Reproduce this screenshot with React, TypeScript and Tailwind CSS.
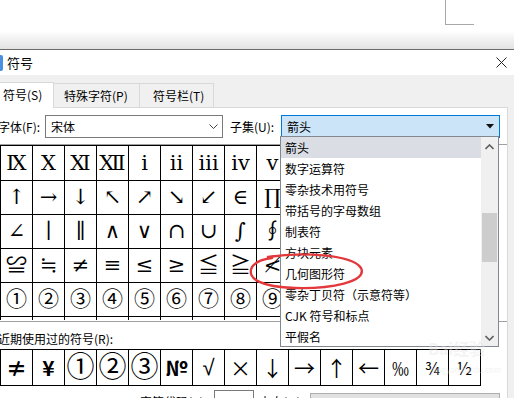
import { useState } from 'react';

const ui = "font-['Noto_Sans_CJK_SC','Noto_Sans',sans-serif]";
const sym = "font-['DejaVu_Serif','Liberation_Serif','Noto_Sans_CJK_SC',serif]";

const rows = [
  ['Ⅸ', 'Ⅹ', 'Ⅺ', 'Ⅻ', 'ⅰ', 'ⅱ', 'ⅲ', 'ⅳ', 'ⅴ', 'ⅵ', 'ⅶ', 'ⅷ', 'ⅸ', 'ⅹ', '←'],
  ['↑', '→', '↓', '↖', '↗', '↘', '↙', '∈', '∏', '∑', '∕', '∝', '∞', '∟', '∵'],
  ['∠', '∣', '∥', '∧', '∨', '∩', '∪', '∫', '∮', '∴', '∷', '∽', '≈', '≒', '≡'],
  ['≌', '≒', '≠', '≡', '≤', '≥', '≦', '≧', '≮', '≯', '⊕', '⊙', '⊥', '⊿', '⌒'],
  ['①', '②', '③', '④', '⑤', '⑥', '⑦', '⑧', '⑨', '⑩', '⑴', '⑵', '⑶', '⑷', '⑸'],
  ['⑹', '⑺', '⑻', '⑼', '⑽', '⑾', '⑿', '⒀', '⒁', '⒂', '⒃', '⒄', '⒅', '⒆', '⒇'],
];

const recent = ['≠', '¥', '①', '②', '③', '№', '√', '×', '↓', '→', '↑', '←', '‰', '¾', '½'];

const subsets = [
  '箭头',
  '数字运算符',
  '零杂技术用符号',
  '带括号的字母数组',
  '制表符',
  '方块元素',
  '几何图形符',
  '零杂丁贝符（示意符等）',
  'CJK 符号和标点',
  '平假名',
];

function recentClass(i: number) {
  if (i === 0 || i === 1 || i === 5) return 'font-bold text-[21px]';
  if (i >= 2 && i <= 4) return `text-[28px] ${sym}`;
  if (i === 6) return "text-[22px] font-['Liberation_Sans',sans-serif]";
  if (i >= 12) return 'text-[17px]';
  return 'text-[21px]';
}

export default function App() {
  const [tab] = useState(0);
  const tabs = ['符号(S)', '特殊字符(P)', '符号栏(T)'];

  return (
    <div className={`relative w-[514px] h-[398px] overflow-hidden bg-white text-[12px] text-black ${ui}`}>
      {/* document page behind the dialog */}
      <div className="h-[31px] bg-white">
        <div className="ml-[445px] w-[29px] h-[25px] border-l border-b border-[#a8a8a8]" />
      </div>
      <div className="h-[18px] bg-gradient-to-b from-white to-[#e2e2e2]" />
      <div className="h-px bg-[#6b6b6b]" />

      {/* title bar */}
      <div className="h-[25px] bg-white flex items-center">
        <div className="w-[3px] h-[16px] rounded-r-[2px] bg-[#4a90e2]" />
        <span className="ml-[4px] text-[13px]">符号</span>
        <svg className="ml-auto mr-[7px]" width="11" height="11" viewBox="0 0 11 11">
          <path d="M0.5 0.5 L10.5 10.5 M10.5 0.5 L0.5 10.5" stroke="#222" strokeWidth="1" />
        </svg>
      </div>

      {/* dialog body */}
      <div className="bg-[#f0f0f0] h-[323px] pt-[7px]">
        <div className="flex items-end h-[25px]">
          {tabs.map((t, i) =>
            i === tab ? (
              <div key={t} className="relative z-10 -ml-px w-[55px] h-[26px] -mb-px bg-white border border-b-0 border-[#d9d9d9] pl-[3px] pt-[3px]">
                {t}
              </div>
            ) : (
              <div key={t} className={`h-[24px] border border-b-0 border-l-0 border-[#d9d9d9] bg-[#f0f0f0] pt-[3px] ${i === 1 ? 'w-[86px] pl-[10px]' : 'w-[74px] pl-[13px]'}`}>
                {t}
              </div>
            )
          )}
        </div>

        <div className="-ml-px w-[509px] h-[300px] bg-white border border-[#d9d9d9]">
          {/* font / subset row */}
          <div className="flex items-center h-[23px] mt-[7px]">
            <span className="-ml-[2px] w-[47px]">字体(F):</span>
            <div className="w-[178px] h-[23px] border border-[#7a7a7a] bg-white flex items-center pl-[5px]">
              <span>宋体</span>
              <svg className="ml-auto mr-[4px]" width="9" height="6" viewBox="0 0 9 6">
                <path d="M0.5 0.5 L4.5 4.5 L8.5 0.5" stroke="#444" fill="none" />
              </svg>
            </div>
            <span className="ml-[7px] w-[51px]">子集(U):</span>
            <div className="w-[219px] h-[23px] border border-[#0078d7] bg-[#cce4f7] flex items-center pl-[5px]">
              <span>箭头</span>
              <svg className="ml-auto mr-[5px]" width="8" height="5" viewBox="0 0 8 5">
                <path d="M0 0 L8 0 L4 4.5 Z" fill="#111" />
              </svg>
            </div>
          </div>

          {/* symbol grid */}
          <div className="mt-[6px] h-[176px] overflow-hidden border-t border-[#a0a0a0]">
            <div className={`border-l border-black w-max ${sym}`}>
              {rows.map((r, ri) => (
                <div key={ri} className={`flex border-b border-black ${ri === 0 ? 'border-t h-[36px]' : 'h-[34px]'}`}>
                  {r.map((c, ci) => (
                    <div key={ci} className="w-[32px] border-r border-black flex items-center justify-center text-[21px] leading-none">
                      {c}
                    </div>
                  ))}
                </div>
              ))}
            </div>
          </div>
          <div className="h-px bg-[#a0a0a0] mt-[1px]" />

          {/* recent symbols */}
          <div className="-ml-[2px] mt-[8px] h-[17px] leading-[17px]">近期使用过的符号(R):</div>
          <div className="mt-[2px] flex w-max border-l border-t border-b border-black h-[37px]">
            {recent.map((c, i) => (
              <div key={i} className={`w-[32px] border-r border-black flex items-center justify-center leading-none ${recentClass(i)}`}>
                {c}
              </div>
            ))}
          </div>

          {/* character code row */}
          <div className="flex items-start mt-[4px]">
            <span className="ml-[140px] w-[74px] pt-[3px]">字符代码(C):</span>
            <div className="w-[40px] h-[22px] border border-[#7a7a7a] bg-white pl-[4px] pt-[2px]">2193</div>
            <span className="ml-[5px] w-[51px] pt-[3px]">来自(M):</span>
            <div className="mt-[3px] w-[190px] h-[22px] border border-[#adadad] bg-[#e1e1e1] pl-[4px] pt-[2px]">Unicode(十六进制)</div>
          </div>
        </div>
      </div>

      {/* opened subset list */}
      <div className="absolute left-[280px] top-[136px] w-[219px] h-[211px] bg-white border border-[#828790] flex">
        <div className="flex-1">
          {subsets.map((s, i) => (
            <div key={s} className={`h-[21px] leading-[21px] pl-[4px] ${i === 0 ? 'bg-[#dadde3]' : ''}`}>
              {s}
            </div>
          ))}
        </div>
        <div className="w-[17px] bg-[#f0f0f0] flex flex-col items-center">
          <svg className="mt-[7px]" width="9" height="6" viewBox="0 0 9 6">
            <path d="M0.5 5 L4.5 1 L8.5 5" stroke="#606060" strokeWidth="1.6" fill="none" />
          </svg>
          <div className="mt-[63px] w-[15px] h-[49px] bg-[#cdcdcd]" />
          <svg className="mt-auto mb-[5px]" width="9" height="6" viewBox="0 0 9 6">
            <path d="M0.5 1 L4.5 5 L8.5 1" stroke="#606060" strokeWidth="1.6" fill="none" />
          </svg>
        </div>
      </div>

      {/* faint watermark */}
      <div className="absolute left-[428px] top-[340px] text-[16px] font-bold text-[#e4e4e4] opacity-40 leading-none">Bai经验</div>
      <div className="absolute left-[432px] top-[366px] text-[8px] text-[#e4e4e4] opacity-40 leading-none">jingyan.baidu.com</div>

      {/* red hand-drawn ellipse */}
      <svg className="absolute left-0 top-0 pointer-events-none" width="514" height="398">
        <path
          d="M268 257 C300 252 352 254 361 268 C368 282 330 289 295 288 C262 287 246 279 252 267 C256 261 264 259 272 258"
          fill="none"
          stroke="#e4393c"
          strokeWidth="2.4"
          strokeLinecap="round"
        />
      </svg>
    </div>
  );
}
